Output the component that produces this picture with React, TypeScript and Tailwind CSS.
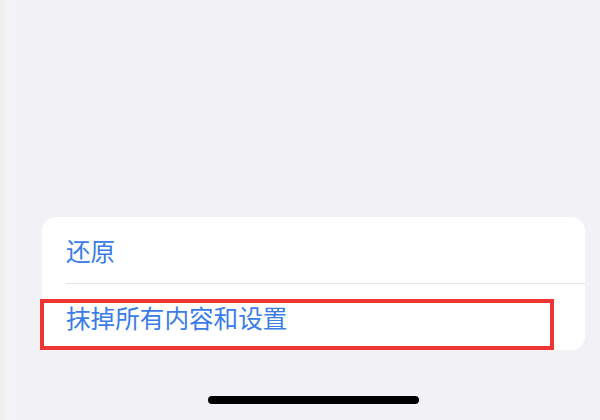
import React from 'react';

const rows = ['还原', '抹掉所有内容和设置'];

const App: React.FC = () => {
  return (
    <div
      className="flex h-[420px] w-[600px] overflow-hidden bg-[#f2f1f6]"
      style={{ fontFamily: '"Noto Sans CJK SC", "Noto Sans", sans-serif' }}
    >
      <div className="w-[5px] shrink-0 bg-[#efefef]" />
      <div className="w-[11px] shrink-0 bg-[#f4f3f8]" />
      <div className="flex flex-1 flex-col pt-[217px] pl-[26px]">
        <div className="relative w-[543px] rounded-[14px] bg-white">
          {rows.map((label, i) => (
            <div key={label}>
              {i > 0 && <div className="ml-[24px] border-t border-[#e4e4e9]" />}
              <div className="flex h-[66px] items-center pl-[24px] text-[24.6px] leading-none text-[#3a7ce8]">
                {label}
              </div>
            </div>
          ))}
          <div className="absolute left-[-2px] top-[82px] h-[51px] w-[514px] border-4 border-[#ef3434]" />
        </div>
        <div className="mt-[46px] ml-[166px] h-[8px] w-[211px] rounded-full bg-black" />
      </div>
    </div>
  );
};

export default App;
